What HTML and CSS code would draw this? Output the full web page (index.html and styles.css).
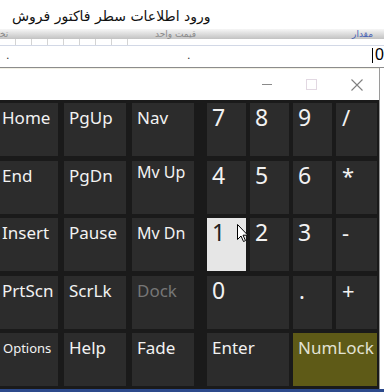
FILE: index.html
```html
<!DOCTYPE html>
<html lang="fa">
<head>
    <meta charset="UTF-8">
    <meta name="viewport" content="width=device-width, initial-scale=1.0">
    <title>ورود اطلاعات سطر فاکتور فروش</title>
    <link rel="stylesheet" href="styles.css">
</head>
<body>
    <div class="form-area">
        <div class="form-title">ورود اطلاعات سطر فاکتور فروش</div>
        <div class="grid-head">
            <span class="head-disc">تخ&zwj;</span>
            <span class="head-price">قیمت واحد</span>
            <span class="head-qty">مقدار</span>
        </div>
        <div class="grid-ticks"></div>
        <div class="grid-row">
            <span class="cell-disc">.</span>
            <span class="cell-price">.</span>
            <span class="cell-qty"><i class="caret"></i>0</span>
        </div>
    </div>

    <div class="osk">
        <div class="osk-titlebar">
            <span class="tb-btn"><i class="ic-min"></i></span>
            <span class="tb-btn"><i class="ic-max"></i></span>
            <span class="tb-btn">
                <svg width="12" height="12" viewBox="0 0 12 12">
                    <path d="M0.5 0.5 L11.5 11.5 M11.5 0.5 L0.5 11.5" stroke="#808080" stroke-width="1.1" fill="none"/>
                </svg>
            </span>
        </div>

        <div class="osk-keys">
            <div class="nav-pad">
                <div class="key first">Home</div>
                <div class="key">PgUp</div>
                <div class="key">Nav</div>

                <div class="key first">End</div>
                <div class="key">PgDn</div>
                <div class="key mv up">Mv Up</div>

                <div class="key first">Insert</div>
                <div class="key">Pause</div>
                <div class="key mv">Mv Dn</div>

                <div class="key first">PrtScn</div>
                <div class="key">ScrLk</div>
                <div class="key off">Dock</div>

                <div class="key first small">Options</div>
                <div class="key">Help</div>
                <div class="key">Fade</div>
            </div>

            <div class="num-pad">
                <div class="key num">7</div>
                <div class="key num">8</div>
                <div class="key num">9</div>
                <div class="key num sym">/</div>

                <div class="key num">4</div>
                <div class="key num">5</div>
                <div class="key num">6</div>
                <div class="key num sym">*</div>

                <div class="key num hover">1
                    <svg class="cursor" width="12" height="19" viewBox="0 0 12 19">
                        <path d="M0.5 0.5 L0.5 15.5 L4 12 L6.5 17.5 L8.5 16.6 L6 11.2 L10.8 11.2 Z" fill="#fff" stroke="#000" stroke-width="1"/>
                    </svg>
                </div>
                <div class="key num">2</div>
                <div class="key num">3</div>
                <div class="key num sym">-</div>

                <div class="key num wide">0</div>
                <div class="key num sym">.</div>
                <div class="key num sym">+</div>

                <div class="key wide">Enter</div>
                <div class="key wide lock">NumLock</div>
            </div>
        </div>
    </div>
    <div class="taskbar-line"></div>
</body>
</html>
```

FILE: styles.css
```css
body {
    margin: 0;
    width: 384px;
    height: 392px;
    overflow: hidden;
    background-color: #fff;
    font-family: 'DejaVu Sans', sans-serif;
}

.form-area {
    height: 67px;
    border-bottom: 1px solid #8c8c8c;
    overflow: hidden;
}

.form-title {
    height: 24px;
    padding: 5px 0 0 12px;
    font-size: 14px;
    line-height: 22px;
    color: #111;
}

.grid-head {
    display: flex;
    height: 10px;
    background: linear-gradient(#f6f6f6, #c2c2c2);
    font-size: 9px;
    line-height: 10px;
    color: #8a8a8a;
    white-space: nowrap;
}

.head-disc {
    width: 12px;
    text-align: left;
}

.head-price {
    width: 184px;
    text-align: right;
}

.head-qty {
    flex: 1;
    text-align: right;
    padding-right: 11px;
    color: #4a64b4;
}

.grid-ticks {
    width: 132px;
    height: 6px;
    background: repeating-linear-gradient(to right, transparent 0 15px, #d4d4d4 15px 16px);
}

.grid-row {
    display: flex;
    align-items: center;
    height: 18px;
    border-top: 1px solid #d2d8e6;
    font-size: 11px;
    color: #333;
}

.cell-disc {
    width: 180px;
    padding-left: 6px;
}

.cell-price {
    width: 180px;
    padding-left: 1px;
}

.cell-qty {
    margin-left: auto;
    font-family: 'Liberation Sans', sans-serif;
    font-size: 16px;
    color: #000;
    display: flex;
    align-items: center;
}

.caret {
    display: inline-block;
    width: 1px;
    height: 15px;
    background-color: #000;
    margin-right: 2px;
}

.osk {
    width: 379px;
    border-right: 1px solid #9a9a9a;
}

.osk-titlebar {
    display: flex;
    justify-content: flex-end;
    align-items: center;
    height: 32px;
    background-color: #fff;
    border-top: 1px solid #f2f0e4;
    box-sizing: border-box;
}

.tb-btn {
    width: 45px;
    display: flex;
    justify-content: center;
    align-items: center;
}

.ic-min {
    width: 10px;
    height: 1px;
    background-color: #8a8a8a;
}

.ic-max {
    width: 9px;
    height: 9px;
    border: 1px solid #e2d8e2;
}

.osk-keys {
    display: flex;
    gap: 13px;
    height: 289px;
    padding-top: 3px;
    box-sizing: border-box;
    background-color: #1a1a1a;
}

.nav-pad {
    display: grid;
    grid-template-columns: 58px 62px 62px;
    grid-template-rows: repeat(5, 53px);
    gap: 4.5px 6px;
}

.num-pad {
    display: grid;
    grid-template-columns: 39px 39px 39px 41px;
    grid-template-rows: repeat(5, 53px);
    gap: 4.5px 4px;
}

.key {
    position: relative;
    background-color: #2c2c2c;
    color: #f2f2f2;
    font-family: 'Noto Sans', sans-serif;
    font-size: 17px;
    line-height: 1;
    padding: 6px 0 0 5px;
    box-sizing: border-box;
    white-space: nowrap;
}

.key.first {
    padding-left: 2px;
}

.key.mv {
    font-size: 16px;
    padding-top: 7px;
}

.key.mv.up {
    padding-top: 3px;
}

.key.small {
    font-size: 13px;
    padding: 9px 0 0 3px;
}

.key.off {
    color: #767676;
}

.key.num {
    font-size: 23px;
    padding-top: 3px;
}

.key.sym {
    font-size: 22px;
    padding-left: 6px;
}

.key.wide {
    grid-column: span 2;
}

.key.hover {
    background-color: #e6e6e6;
    color: #222;
}

.key.lock {
    background-color: #5e5a17;
    color: #e2e2d4;
}

.cursor {
    position: absolute;
    left: 30px;
    top: 6px;
}

.taskbar-line {
    height: 3px;
    background-color: #2c4a8c;
}
```
